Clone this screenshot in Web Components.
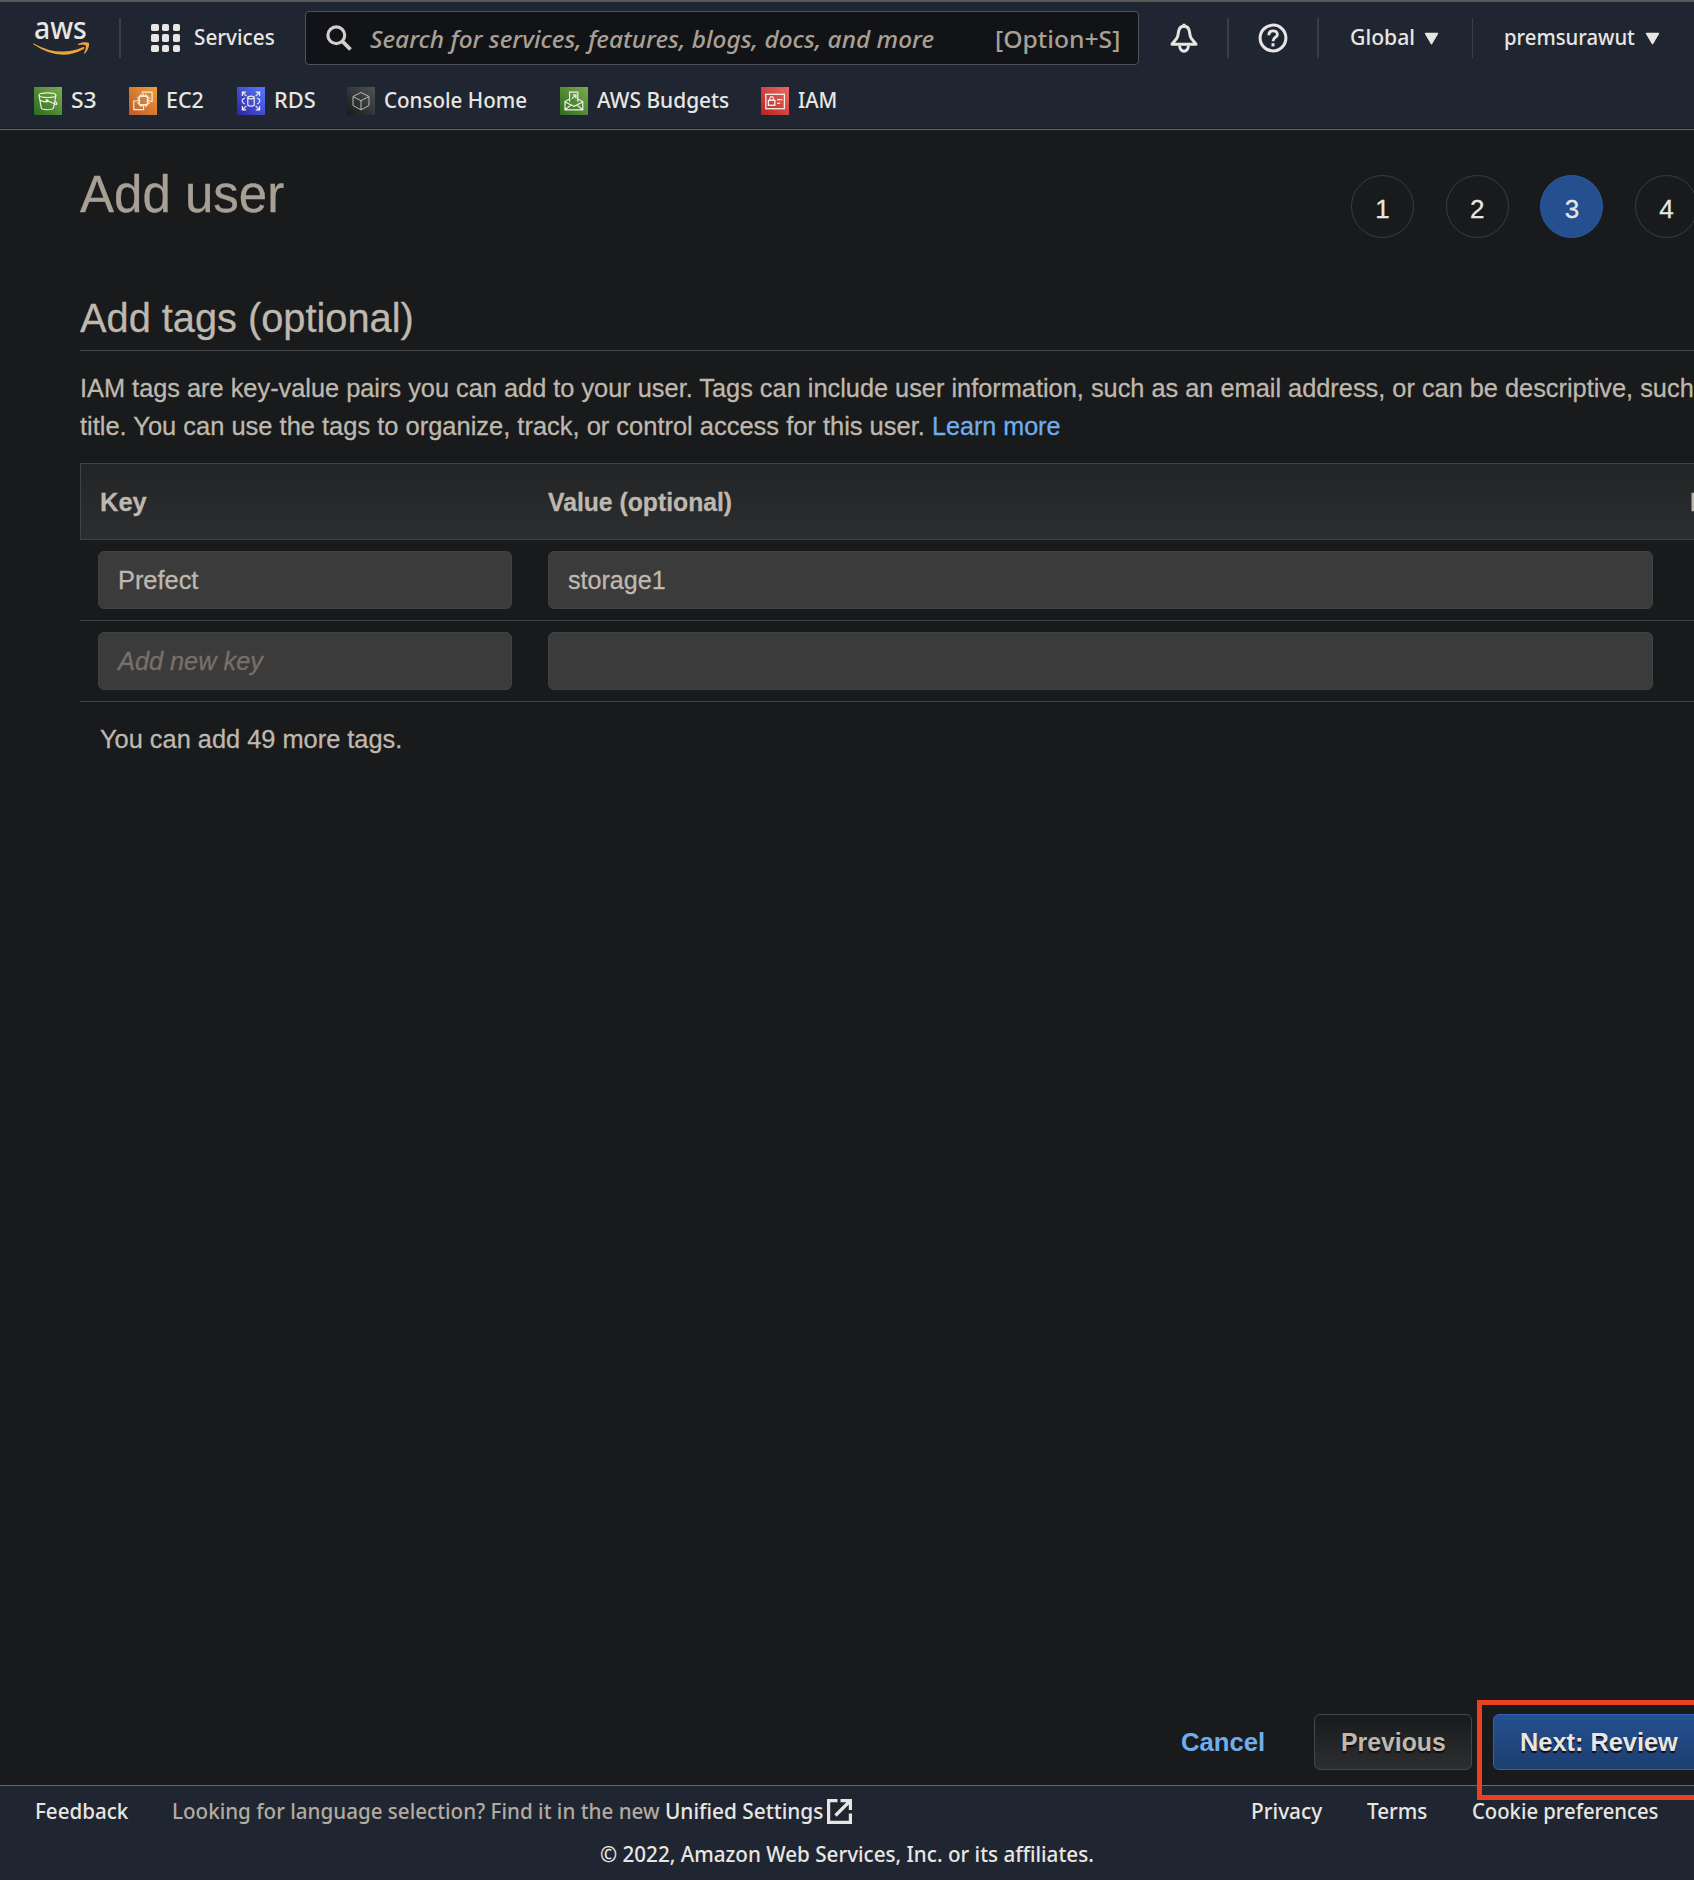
<!DOCTYPE html>
<html lang="en">
<head>
<meta charset="utf-8">
<title>Add user</title>
<style>
html,body{margin:0;height:100%;overflow:hidden;background:#181a1b}
body{width:1694px;height:1880px;font-family:"Liberation Sans",Arial,sans-serif;color:#bfb8af}
</style>
</head>
<body>
<iam-app></iam-app>
<script>
const define = (name, html, setup) => customElements.define(name, class extends HTMLElement {
  connectedCallback() {
    if (this.shadowRoot) return;
    this.attachShadow({ mode: 'open' }).innerHTML = html;
    if (setup) setup(this, this.shadowRoot);
  }
});

/* One line of text condensed or widened to the width given in "w". */
define('fit-text', `<style>
  :host{display:block;flex:none;white-space:nowrap;line-height:1}
  span{display:inline-block;transform-origin:0 50%;white-space:pre}
</style><span><slot></slot></span>`, (el, root) => {
  const w = +el.getAttribute('w'), span = root.querySelector('span');
  el.style.width = w + 'px';
  span.style.transform = 'scaleX(' + w / span.offsetWidth + ')';
});

define('bar-divider', `<style>:host{display:block;flex:none;width:2px;height:40px;background:#3a3d3f}</style>`);

/* Service tiles: gradient start, gradient end, line art. */
const kinds = {
  s3: ['#2f6a1f', '#78ae4c', '<ellipse cx="13.5" cy="8.2" rx="8.4" ry="2.3"/><path d="M5.1 8.5 7.2 20.5C7.5 23.5 19 23.5 19.6 20.5L22 8.5M13 13.5 21.5 17.2C23.7 17.8 23 15.5 20.9 14.3M6 13.2Q10 15 13 15"/><circle cx="13" cy="13.7" r="1" fill="#f0eeea"/>'],
  ec2: ['#bd5a2a', '#f29e35', '<rect x="10.2" y="9.2" width="8.4" height="8.6" rx="1" stroke-width="1.7"/><path d="M12 7v2M14.4 7v2M16.8 7v2M12 18v2M14.4 18v2M16.8 18v2M8 11h2M8 13.5h2M8 16h2M19 11h2M19 13.5h2M19 16h2"/><path d="M13.5 6.8V5.2h9.6v9.2H21M8 14H4.8v8.6h9.8V20"/>'],
  rds: ['#3023a4', '#567aff', '<ellipse cx="14" cy="10.5" rx="3.2" ry="1.3"/><path d="M10.8 10.5v7.2c0 1.8 6.4 1.8 6.4 0v-7.2M5.4 9V5.2h3.8M5.4 5.2l4 4M22.6 9V5.2h-3.8M22.6 5.2l-4 4M5.4 19v3.8h3.8M5.4 22.8l4-4M22.6 19v3.8h-3.8M22.6 22.8l-4-4M7.8 11Q5 12 5.2 14T7.8 17M20.2 11Q23 12 22.8 14T20.2 17"/>'],
  home: ['#17191b', '#515456', '<path stroke="#c9c8c5" stroke-width=".9" d="M14 5.5 22 9.5v9L14 22.8 6 18.5v-9ZM6 9.5l8 4.2 8-4.2M14 13.7v9"/>'],
  budget: ['#2f6a1f', '#78ae4c', '<path d="M9.6 14.8V5.2h8.2v9.6M9.6 12 5 14.5v8.3h17.8v-8.3L17.8 12M5 15l9 4.4 8.8-4.4M5.3 22.5l5.8-4.4M22.5 22.5 17 18.1M11.8 11.6l4-3.4M12.7 7.8h3.3v3.6"/>'],
  iam: ['#b5221f', '#ee6a64', '<rect x="4.8" y="7.3" width="18.6" height="14.4" stroke-width="1.3"/><rect x="7.4" y="13.3" width="6.4" height="5" stroke-width="1.4"/><path d="M8.9 13v-1.6c0-2.3 3.5-2.3 3.5 0V13M16 12.6h5.2M16 16.4h3.2"/>']
};

define('fav-link', `<style>
  :host{display:flex;align-items:center;gap:9px}
  svg{flex:none;width:28px;height:28px;fill:none;stroke:#f0eeea;stroke-width:1.2}
  .t{padding-bottom:4px}
</style><svg viewBox="0 0 28 28"></svg><div class="t"><slot></slot></div>`, (el, root) => {
  const v = kinds[el.getAttribute('kind')];
  root.querySelector('svg').innerHTML = `<defs><linearGradient id="g" x1="0" y1="1" x2="1" y2="0"><stop stop-color="${v[0]}"/><stop offset="1" stop-color="${v[1]}"/></linearGradient></defs><rect width="28" height="28" fill="url(#g)" stroke="none"/>` + v[2];
});

define('menu-caret', `<style>:host{display:flex;flex:none}</style><svg width="15" height="13" viewBox="0 0 15 13"><path d="M1.6.8h11.8q1.3 0 .6 1.2L8.3 11.8q-.8 1.2-1.6 0L1 2Q.3.8 1.6.8Z" fill="#e8e6e3"/></svg>`);

define('console-header', `<style>
  :host{display:block;box-sizing:border-box;height:130px;background:#202631;border-top:2px solid #565656;border-bottom:1px solid #6c665b;box-shadow:inset 0 -1px #181a1b;color:#e8e6e3;font:500 22px "Noto Sans","Open Sans",sans-serif}
  .top{display:flex;align-items:center;height:72px}
  .logo{width:57px;margin-left:33px;height:44px;display:flex;flex-direction:column}
  .logo fit-text{font-size:31px;line-height:30px;height:25px;margin:-4.5px 0 0 1px}
  .logo svg{margin-top:5px;flex:none}
  .grid{display:grid;grid-template-columns:repeat(3,7.5px);gap:3.4px;margin:0 14px 0 30px}
  .grid i{height:7.2px;border-radius:1.8px;background:#e8e6e3}
  .label{padding-bottom:4px}
  .search{box-sizing:border-box;width:834px;height:54px;margin-left:30px;border:1px solid #4d535a;border-radius:4px;background:#121317;display:flex;align-items:center;color:#a8a095;font-size:24px}
  .search svg{margin:0 17px 0 19px;flex:none}
  .ph{font-style:italic;padding-top:1px}
  .key{margin-left:61px;padding-top:1px}
  .favs{display:flex;align-items:center;height:54px;padding-left:34px}
</style>
<div class="top">
  <div class="logo"><fit-text w="53">aws</fit-text>
    <svg width="57" height="15" viewBox="0 0 57 15"><path d="M.8 1.4Q26 15.6 49.5 5.2C51.3 4.5 52.3 5.8 50.8 6.9Q27 20.5.3 2.2-.2 1 .8 1.4Z" fill="#efa23b"/><path d="M45 2.2C48.5-.5 54.8-.2 55.8 1.1 56.8 2.7 55.2 8.5 52 11.4 51.2 12 50.8 11.6 51.2 10.8 52.3 8.2 53.5 4.5 52.6 3.5 51.6 2.4 48.3 2.7 45.8 3.1 44.8 3.2 44.4 2.7 45 2.2Z" fill="#efa23b"/></svg></div>
  <bar-divider style="margin-left:29px"></bar-divider>
  <div class="grid"><i></i><i></i><i></i><i></i><i></i><i></i><i></i><i></i><i></i></div>
  <div class="label"><fit-text w="81">Services</fit-text></div>
  <div class="search">
    <svg width="28" height="28" viewBox="0 0 28 28" fill="none" stroke="#d3cfc9" stroke-width="3.2"><circle cx="11.3" cy="11.3" r="8.4"/><path d="m17.2 17.2 8.3 8.3" stroke-width="3.8"/></svg>
    <fit-text class="ph" w="564">Search for services, features, blogs, docs, and more</fit-text>
    <fit-text class="key" w="125.5">[Option+S]</fit-text>
  </div>
  <svg style="margin-left:29.5px" width="30" height="30" viewBox="0 0 30 30" fill="none" stroke="#e8e6e3" stroke-width="3"><path d="M15 3.2C9.5 3.2 9.6 8.5 8.8 13 8.2 16 4.5 18.5 3 21.3H27C25.5 18.5 21.8 16 21.2 13 20.4 8.5 20.5 3.2 15 3.2ZM15 .8V4" stroke-linejoin="round"/><path d="M10.6 22.5c0 7.5 8.8 7.5 8.8 0"/></svg>
  <bar-divider style="margin-left:28.5px;width:1.5px"></bar-divider>
  <svg style="margin-left:29.5px" width="30" height="30" viewBox="0 0 30 30" fill="none" stroke="#e8e6e3" stroke-width="3"><circle cx="15" cy="15" r="12.9"/><path d="M10.8 12.2C10.8 6.5 19.4 6.7 19.4 11.4 19.4 14.4 15 14.2 15 18.3" stroke-width="2.8"/><path d="M15 20.2v3.2" /></svg>
  <bar-divider style="margin-left:29px;width:1.5px"></bar-divider>
  <div class="label" style="margin-left:31px"><fit-text w="65.5">Global</fit-text></div>
  <menu-caret style="margin-left:8.5px"></menu-caret>
  <bar-divider style="margin-left:33px;width:1px"></bar-divider>
  <div class="label" style="margin-left:31px"><fit-text w="131">premsurawut</fit-text></div>
  <menu-caret style="margin-left:10px"></menu-caret>
</div>
<div class="favs">
  <fav-link kind="s3"><fit-text w="26">S3</fit-text></fav-link>
  <fav-link kind="ec2" style="margin-left:32px"><fit-text w="38">EC2</fit-text></fav-link>
  <fav-link kind="rds" style="margin-left:33px"><fit-text w="41.5">RDS</fit-text></fav-link>
  <fav-link kind="home" style="margin-left:31.5px"><fit-text w="143">Console Home</fit-text></fav-link>
  <fav-link kind="budget" style="margin-left:33px"><fit-text w="132">AWS Budgets</fit-text></fav-link>
  <fav-link kind="iam" style="margin-left:32px"><fit-text w="39">IAM</fit-text></fav-link>
</div>`);

define('wizard-step', `<style>
  :host{display:flex;flex:none;box-sizing:border-box;width:63px;height:63px;border-radius:50%;border:1px solid #3a3d3f;align-items:center;justify-content:center;color:#e8e6e3;font-size:26px;line-height:1;padding-top:4px}
  :host([current]){background:#25508f;border-color:#2a5aa3}
</style><slot></slot>`);

define('tag-field', `<style>
  :host{display:flex;flex:none;box-sizing:border-box;height:58px;border:1px solid #3e4446;border-radius:6px;background:#3b3b3b;align-items:center;padding-left:18.5px;font-size:26px}
  :host([empty]){font-style:italic;color:#77716a}
</style><slot></slot>`);

define('tag-row', `<style>
  :host{display:flex;align-items:center;height:80px;padding-left:18px;gap:36px;border-bottom:1px solid #3e4446}
  :host([head]){box-sizing:border-box;height:77px;border:1px solid #3e4446;border-right:0;background:linear-gradient(#222426,#2b2d2f);font-weight:700;font-size:26px;padding-left:18.5px;gap:0}
</style><slot></slot>`);

define('console-button', `<style>
  :host{display:flex;flex:none;box-sizing:border-box;height:56px;border:1px solid #45484a;border-radius:6px;align-items:center;padding-left:25.5px;background:linear-gradient(#181a1b,#2c2e30);text-shadow:0 2px 1px #0c0d0e}
  :host([primary]){background:linear-gradient(#25508f,#1c3e70);border-color:#2e63b4;color:#e8e6e3}
</style><slot></slot>`);

define('console-footer', `<style>
  :host{display:block;box-sizing:border-box;height:95px;border-top:1px solid #6c665b;background:#202631;color:#e8e6e3;font:500 22px "Noto Sans","Open Sans",sans-serif}
  .row{display:flex;align-items:center;height:48px;padding-left:35px}
  .hint{color:#b2aba1;margin-left:43px}
  .copy{padding-left:600px;height:38px;display:flex;align-items:center}
</style>
<div class="row">
  <fit-text w="93.5">Feedback</fit-text>
  <fit-text class="hint" w="487.5">Looking for language selection? Find it in the new</fit-text>
  <fit-text style="margin-left:6px" w="158">Unified Settings</fit-text>
  <svg style="margin-left:3px;margin-top:2px" width="27" height="27" viewBox="0 0 27 27" fill="none" stroke="#e8e6e3" stroke-width="3.2"><path d="M11.5 2.6H2.6V24.4H24.4V15.5M14.5 2.6H24.4V12M24 3 9.5 17.5"/></svg>
  <fit-text style="margin-left:398px" w="71">Privacy</fit-text>
  <fit-text style="margin-left:45px" w="60">Terms</fit-text>
  <fit-text style="margin-left:44.5px" w="186">Cookie preferences</fit-text>
</div>
<div class="copy"><fit-text w="494">© 2022, Amazon Web Services, Inc. or its affiliates.</fit-text></div>`);

define('iam-app', `<style>
  :host{display:flex;flex-direction:column;width:1694px;height:1880px;overflow:hidden}
  main{flex:1;padding-left:80px;font-size:26px;-webkit-text-stroke:.3px}
  .title{display:flex;align-items:flex-start;padding-top:35px;height:75px}
  .title h1{margin:0;font-weight:400;font-size:51px;color:#a8a095;line-height:60px;width:1271px}
  .title h1 fit-text{line-height:60px}
  .steps{display:flex;gap:31.7px;margin-top:10px;width:343px}
  h2{margin:0;font-weight:400;font-size:40px;height:72px;border-bottom:1px solid #45484a;padding-top:38px;color:#bfb8af}
  h2 fit-text{line-height:80px;height:72px}
  .intro{margin:18px 0 18px}
  .l{display:flex;height:38px}
  .l fit-text{line-height:38px}
  .link{color:#70adec}
  .rail{box-sizing:border-box;display:flex;align-items:flex-start;height:83px;padding:11px 0 0 1181px;border-top:1px solid #151718;font-size:26px;font-weight:700;position:relative}
  .cancel{line-height:56px;color:#70adec}
  .mark{position:absolute;left:1477px;top:-3px;width:240px;height:90px;border:5px solid #ea4025}
</style>
<console-header></console-header>
<main>
  <div class="title"><h1><fit-text w="204">Add user</fit-text></h1>
    <div class="steps"><wizard-step>1</wizard-step><wizard-step>2</wizard-step><wizard-step current>3</wizard-step><wizard-step>4</wizard-step></div></div>
  <h2><fit-text w="334">Add tags (optional)</fit-text></h2>
  <div class="intro"><div class="l"><fit-text w="1614">IAM tags are key-value pairs you can add to your user. Tags can include user information, such as an email address, or can be descriptive, such</fit-text></div>
  <div class="l"><fit-text w="845">title. You can use the tags to organize, track, or control access for this user.</fit-text><fit-text class="link" style="margin-left:7px" w="128.5">Learn more</fit-text></div></div>
  <tag-row head><fit-text style="margin-right:401.5px" w="47">Key</fit-text><fit-text style="margin-right:957px" w="184.5">Value (optional)</fit-text><fit-text w="98">Remove</fit-text></tag-row>
  <tag-row><tag-field style="width:414px"><fit-text w="80">Prefect</fit-text></tag-field><tag-field style="width:1105px"><fit-text w="97.5">storage1</fit-text></tag-field></tag-row>
  <tag-row><tag-field empty style="width:414px"><fit-text w="145">Add new key</fit-text></tag-field><tag-field style="width:1105px"></tag-field></tag-row>
  <fit-text style="margin:24px 0 0 19.5px" w="302.5">You can add 49 more tags.</fit-text>
</main>
<div class="rail">
  <fit-text class="cancel" w="84">Cancel</fit-text>
  <console-button style="width:158px;margin-left:49px"><fit-text w="105">Previous</fit-text></console-button>
  <console-button primary style="width:220px;margin-left:21px"><fit-text w="158">Next: Review</fit-text></console-button>
  <div class="mark"></div>
</div>
<console-footer></console-footer>`);
</script>
</body>
</html>
